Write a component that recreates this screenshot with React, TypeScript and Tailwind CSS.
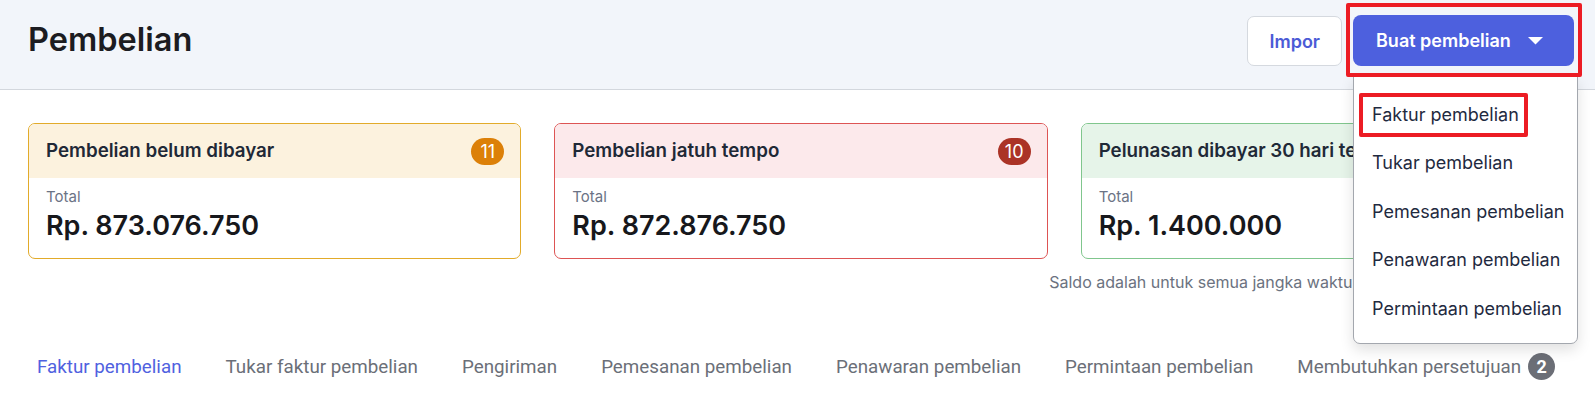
import React from "react";

const cards = [
  {
    title: "Pembelian belum dibayar",
    badge: "11",
    amount: "Rp. 873.076.750",
    border: "border-[#e2ab2a]",
    head: "bg-[#fcf2de]",
    badgeBg: "bg-[#dc8008]",
  },
  {
    title: "Pembelian jatuh tempo",
    badge: "10",
    amount: "Rp. 872.876.750",
    border: "border-[#dd5454]",
    head: "bg-[#fce9eb]",
    badgeBg: "bg-[#ab3326]",
  },
  {
    title: "Pelunasan dibayar 30 hari terakhir",
    badge: "",
    amount: "Rp. 1.400.000",
    border: "border-[#80c68d]",
    head: "bg-[#e6f4e9]",
    badgeBg: "",
  },
];

const menu = [
  "Faktur pembelian",
  "Tukar pembelian",
  "Pemesanan pembelian",
  "Penawaran pembelian",
  "Permintaan pembelian",
];

const tabs = [
  "Faktur pembelian",
  "Tukar faktur pembelian",
  "Pengiriman",
  "Pemesanan pembelian",
  "Penawaran pembelian",
  "Permintaan pembelian",
];

export default function App() {
  return (
    <div className="w-[1595px] min-h-[403px] bg-white font-['Inter',sans-serif] overflow-hidden">
      {/* Header */}
      <div className="h-[90px] bg-[#f2f5fa] border-b border-[#d3d7dd] flex items-start justify-between pl-7 pr-[21px] pt-[15px]">
        <div className="h-[50px] flex items-center">
          <h1 className="text-[32.5px] leading-[40px] font-semibold text-[#1c1c21]">
            Pembelian
          </h1>
        </div>
        <div className="flex items-start gap-[11px]">
          <button className="h-[50px] mt-px px-[21px] rounded-[7px] border border-[#d5d9df] bg-white text-[18px] font-semibold text-[#4b5bd6]">
            Impor
          </button>
          <div className="relative">
            <button className="h-[51px] w-[221px] pl-[23px] pr-[31px] rounded-[8px] bg-[#4d60de] text-white text-[18px] font-semibold flex items-center justify-between">
              <span>Buat pembelian</span>
              <svg width="15" height="8" viewBox="0 0 15 8" className="mt-px">
                <path d="M0 0 L15 0 L7.5 7.5 Z" fill="white" />
              </svg>
            </button>
            <div className="absolute -left-[7px] -top-[12px] -right-[8px] -bottom-[11px] border-[4px] border-[#ec1c24] rounded-[2px] z-20 pointer-events-none" />
            <div className="absolute left-0 top-[61px] w-[225px] bg-white border border-[#a3a7ae] rounded-b-[7px] shadow-[0_6px_14px_rgba(0,0,0,0.12)] pt-[13px] pb-[10px] z-10">
              {menu.map((m, i) => (
                <div
                  key={m}
                  className="h-[48.5px] flex items-center pl-[18px] text-[18px] text-[#1f2a40]"
                >
                  {i === 0 ? (
                    <span className="relative">
                      {m}
                      <span className="absolute -left-[13px] -right-[9px] -top-[8px] -bottom-[9px] border-[4px] border-[#ec1c24] rounded-[2px]" />
                    </span>
                  ) : (
                    <span>{m}</span>
                  )}
                </div>
              ))}
            </div>
          </div>
        </div>
      </div>

      {/* Cards */}
      <div className="mt-[33px] grid grid-cols-3 gap-[33px] pl-7 pr-[21px]">
        {cards.map((c) => (
          <div key={c.title} className={`border ${c.border} rounded-[7px] overflow-hidden`}>
            <div className={`${c.head} h-[54px] flex items-center justify-between pl-[17px] pr-[16px]`}>
              <span className="text-[18.75px] font-semibold text-[#1f2937] whitespace-nowrap">{c.title}</span>
              {c.badge && (
                <span className={`${c.badgeBg} h-[27px] min-w-[33px] px-[5px] rounded-full text-white text-[18px] leading-[27px] text-center`}>
                  {c.badge}
                </span>
              )}
            </div>
            <div className="pl-[17px] pt-2 pb-4">
              <div className="text-[15px] leading-[22px] text-[#6b7385]">Total</div>
              <div className="mt-[2px] text-[27px] leading-[32px] font-semibold text-[#17181c]">{c.amount}</div>
            </div>
          </div>
        ))}
      </div>

      <div className="mt-3 pl-7 pr-[21px] flex justify-end">
        <p className="text-[16px] leading-[22px] text-[#6b7280] mr-[217px]">
          Saldo adalah untuk semua jangka waktu.
        </p>
      </div>

      {/* Tabs */}
      <div className="mt-[60px] flex items-center pl-[37px] gap-[44px] font-['Roboto',sans-serif] text-[18.8px] leading-[26px]">
        {tabs.map((t, i) => (
          <span key={t} className={i === 0 ? "text-[#5061e0]" : "text-[#6b6f78]"}>
            {t}
          </span>
        ))}
        <span className="flex items-center text-[#6b6f78]">
          Membutuhkan persetujuan
          <span className="ml-[7px] w-[27px] h-[27px] rounded-full bg-[#6b6e76] text-white text-[18px] font-bold flex items-center justify-center">
            2
          </span>
        </span>
      </div>
    </div>
  );
}
